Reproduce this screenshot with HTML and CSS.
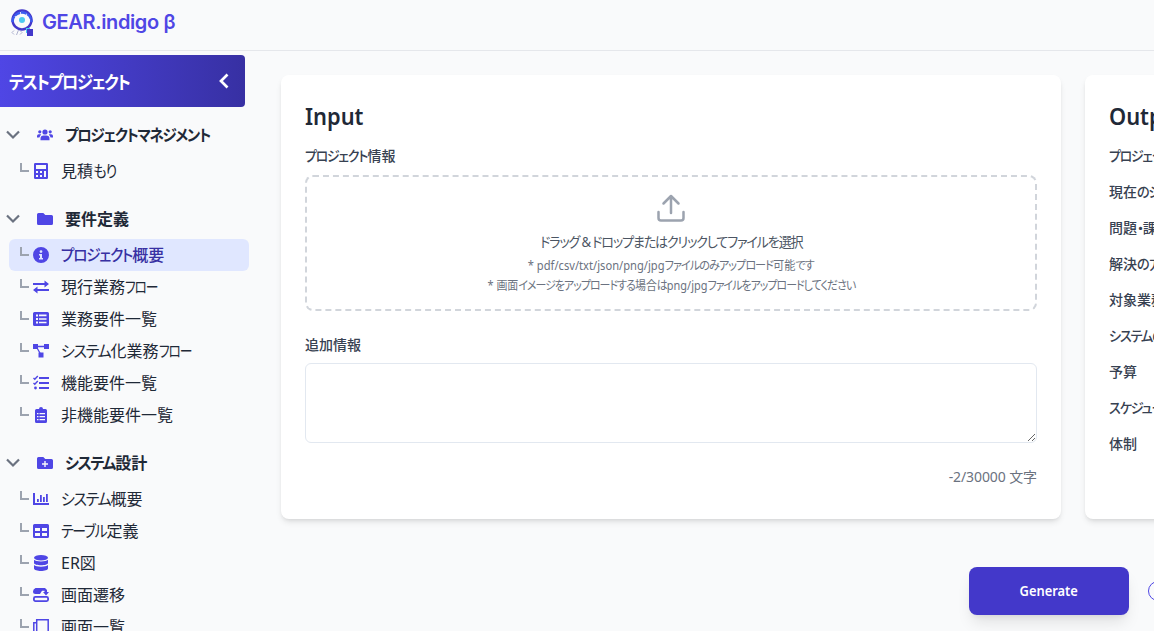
FILE: index.html
```html
<!DOCTYPE html>
<html lang="ja">
<head>
<meta charset="utf-8">
<title>GEAR.indigo β</title>
<link rel="stylesheet" href="styles.css">
</head>
<body>
<header class="topbar">
  <svg class="logo" viewBox="0 0 24 28"><circle cx="12" cy="11" r="9.500" fill="none" stroke="#4338ca" stroke-width="2.400"/><path d="M2.500 13a9.500 9.500 0 1 1 19 0" fill="none" stroke="#3b5cf0" stroke-width="2.400" stroke-dasharray="6 .8"/><circle cx="12" cy="11" r="3" fill="#4cc9f0"/><path d="M16 19h4v5h-4z" fill="#4cc9f0"/><path d="M17 20h6v7h-6z" fill="#4338ca"/><path d="M4 21.500l-2 2 2 2M8.500 21l-2 5M10 21.500l2 2-2 2" fill="none" stroke="#a5a8c8" stroke-width=".9"/></svg>
  <span class="brand">GEAR.indigo β</span>
</header>
<div class="layout">
<nav class="sidebar">
  <div class="project"><span class="kana k-project">テストプロジェクト</span><svg width="12" height="16" viewBox="0 0 12 16"><path d="M9.500 1.500L3 8l6.500 6.500" fill="none" stroke="#fff" stroke-width="2.700"/></svg></div>

  <div class="group">
    <div class="group-title"><svg class="chev" viewBox="0 0 14 10"><path d="M1 1.500l6 6 6-6"/></svg><svg class="icon" viewBox="0 0 16 16"><circle cx="8" cy="5" r="2.600"/><circle cx="2.800" cy="4.800" r="1.600"/><circle cx="13.200" cy="4.800" r="1.600"/><path d="M3.500 13.200v-1.500A3.200 3.200 0 0 1 6.700 8.500h2.600a3.200 3.200 0 0 1 3.200 3.200v1.500zM0 10.500V9a1.800 1.800 0 0 1 1.800-1.800h2.400L3 9.200l-.6 1.300zM16 10.500V9a1.800 1.800 0 0 0-1.800-1.800h-2.400L13 9.200l.6 1.300z"/></svg><span class="kana k-management">プロジェクトマネジメント</span></div>
    <div class="item"><i class="branch"></i><svg class="icon" viewBox="0 0 16 16"><path fill-rule="evenodd" d="M2.200 0h11.600q1.200 0 1.200 1.200v13.600q0 1.200-1.200 1.200H2.200Q1 16 1 14.800V1.200Q1 0 2.200 0zM3 2v4h10V2zM3 8v2h2V8zm4 0v2h2V8zm4 0v6h2V8zM3 12v2h2v-2zm4 0v2h2v-2z"/></svg><span>見積<span class="kana k-mori">もり</span></span></div>
  </div>

  <div class="group">
    <div class="group-title"><svg class="chev" viewBox="0 0 14 10"><path d="M1 1.500l6 6 6-6"/></svg><svg class="icon" viewBox="0 0 16 16"><path d="M0 3.500Q0 2 1.500 2h4.800l2 2h6.200Q16 4 16 5.500v7q0 1.500-1.500 1.500h-13Q0 14 0 12.500z"/></svg><span>要件定義</span></div>
    <div class="item active"><i class="branch"></i><svg class="icon" viewBox="0 0 16 16"><path fill-rule="evenodd" d="M8 0a8 8 0 1 0 0 16A8 8 0 0 0 8 0zm0 3.200a1.400 1.400 0 1 1 0 2.800 1.400 1.400 0 0 1 0-2.800zM6 7h3v4h1v1.500H6V11h1V8.500H6z"/></svg><span><span class="kana k-overview">プロジェクト</span>概要</span></div>
    <div class="item"><i class="branch"></i><svg class="icon" viewBox="0 0 16 16"><path d="M0 4h11.500V1.500L16 5l-4.500 3.500V6H0zM16 10H4.500V7.500L0 11l4.500 3.500V12H16z"/></svg><span>現行業務<span class="kana k-flow">フロー</span></span></div>
    <div class="item"><i class="branch"></i><svg class="icon" viewBox="0 0 16 16"><path fill-rule="evenodd" d="M1.500 1h13Q16 1 16 2.500v11q0 1.500-1.500 1.500h-13Q0 15 0 13.500v-11Q0 1 1.500 1zM3 3.600v2h2v-2zm3 0v1.600h7.500V3.600zM3 7v2h2V7zm3 .2v1.600h7.500V7.200zM3 10.400v2h2v-2zm3 .3v1.600h7.500v-1.600z"/></svg><span>業務要件一覧</span></div>
    <div class="item"><i class="branch"></i><svg class="icon" viewBox="0 0 16 16"><path d="M0 1h5v5H0zM11 1h5v5h-5zM5.500 9.500h5v5h-5z"/><path d="M4 3.500h8M3.500 4l4 7" fill="none" stroke="#4f46e5" stroke-width="1.300"/></svg><span><span class="kana k-system">システム</span>化業務<span class="kana k-flow">フロー</span></span></div>
    <div class="item"><i class="branch"></i><svg class="icon" viewBox="0 0 16 16"><path d="M6 2h10v1.900H6zM6 7h10v1.900H6zM6 12h10v1.900H6z"/><circle cx="2.500" cy="13" r="1.400"/><path d="M.5 3l1.300 1.300L4.800 1M.5 8l1.300 1.300L4.800 6" fill="none" stroke="#4f46e5" stroke-width="1.400"/></svg><span>機能要件一覧</span></div>
    <div class="item"><i class="branch"></i><svg class="icon" viewBox="0 0 16 16"><path fill-rule="evenodd" d="M3.500 2H6a2 2 0 0 1 4 0h2.500Q14 2 14 3.500v11q0 1.500-1.500 1.500h-9Q2 16 2 14.500v-11Q2 2 3.500 2zM4 6v1.300h1.500V6zm2.500 0v1.300H12V6zM4 9v1.300h1.500V9zm2.500 0v1.300H12V9zM4 12v1.300h1.500V12zm2.500 0v1.300H12V12z"/></svg><span>非機能要件一覧</span></div>
  </div>

  <div class="group">
    <div class="group-title"><svg class="chev" viewBox="0 0 14 10"><path d="M1 1.500l6 6 6-6"/></svg><svg class="icon" viewBox="0 0 16 16"><path fill-rule="evenodd" d="M0 3.500Q0 2 1.500 2h4.800l2 2h6.200Q16 4 16 5.500v7q0 1.500-1.500 1.500h-13Q0 14 0 12.500zM7.300 6v2.300H5v1.400h2.300V12h1.400V9.700H11V8.300H8.700V6z"/></svg><span><span class="kana k-system">システム</span>設計</span></div>
    <div class="item"><i class="branch"></i><svg class="icon" viewBox="0 0 16 16"><path d="M0 2h2v10h14v2H0zM4 8h1.800v3H4zM7 4h1.800v7H7zM10 6h1.800v5H10zM13 3h1.800v8H13z"/></svg><span><span class="kana k-system">システム</span>概要</span></div>
    <div class="item"><i class="branch"></i><svg class="icon" viewBox="0 0 16 16"><path fill-rule="evenodd" d="M1.500 1h13Q16 1 16 2.500v11q0 1.500-1.500 1.500h-13Q0 15 0 13.500v-11Q0 1 1.500 1zM2 5v3h5V5zm7 0v3h5V5zM2 10v3h5v-3zm7 0v3h5v-3z"/></svg><span><span class="kana k-table">テーブル</span>定義</span></div>
    <div class="item"><i class="branch"></i><svg class="icon" viewBox="0 0 16 16"><ellipse cx="8" cy="2.800" rx="7" ry="2.800"/><path d="M1 4.800c2 2.200 12 2.200 14 0V8c0 3-14 3-14 0zM1 10c2 2.200 12 2.200 14 0v3.200c0 3.600-14 3.600-14 0z"/></svg><span>ER図</span></div>
    <div class="item"><i class="branch"></i><svg class="icon" viewBox="0 0 16 16"><path d="M2.500 1H12l2 2v2h2l-3 3.500L10 5h1.500V3.800H9L7 7H2.500Q0 7 0 4.500T2.500 1z"/><rect x=".9" y="9.900" width="14.200" height="4.200" rx="1.500" fill="none" stroke="#4f46e5" stroke-width="1.800"/></svg><span>画面遷移</span></div>
    <div class="item"><i class="branch"></i><svg class="icon" viewBox="0 0 16 16"><path d="M3.700.8h11.500v12H3.700zM3.500 3.800H.8v11.500h11" fill="none" stroke="#4f46e5" stroke-width="1.500"/></svg><span>画面一覧</span></div>
  </div>
</nav>

<main class="content">
  <div class="cards">
    <section class="card">
      <h2>Input</h2>
      <div class="label"><span class="kana k-label">プロジェクト</span>情報</div>
      <div class="drop">
        <svg class="upload" viewBox="0 0 28 28"><path d="M1.500 18v6q0 2.500 2.500 2.500h20q2.500 0 2.500-2.500v-6M14 19V2M6.500 9.500L14 2l7.500 7.500" fill="none" stroke="#9ca3af" stroke-width="2.500" stroke-linecap="round" stroke-linejoin="round"/></svg>
        <p class="drop-main">ドラッグ &amp; ドロップまたはクリックしてファイルを選択</p>
        <p class="drop-note n1">* pdf/csv/txt/json/png/jpg<span class="kana">ファイルのみアップロード</span>可能<span class="kana">です</span></p>
        <p class="drop-note n2">* 画面<span class="kana">イメージをアップロードする</span>場合<span class="kana">は</span>png/jpg<span class="kana">ファイルをアップロードしてください</span></p>
      </div>
      <div class="label extra">追加情報</div>
      <textarea class="area"></textarea>
      <div class="count">-2/30000 文字</div>
    </section>
    <section class="card output">
      <h2>Output</h2>
      <ul>
        <li><span class="kana k-label">プロジェクト</span>情報</li>
        <li>現在<span class="kana k-list">のシステム</span></li>
        <li>問題<span class="kana k-dot">・</span>課題</li>
        <li>解決<span class="kana k-list">の</span>方針</li>
        <li>対象業務</li>
        <li><span class="kana k-list">システムの</span>範囲</li>
        <li>予算</li>
        <li><span class="kana k-list">スケジュール</span></li>
        <li>体制</li>
      </ul>
    </section>
  </div>
  <div class="actions">
    <button class="generate"><span>Generate</span></button>
    <span class="ring"></span>
  </div>
</main>
</div>
</body>
</html>
```
FILE: styles.css
```css
* { box-sizing: border-box; }
body {
  margin: 0;
  height: 631px;
  overflow: hidden;
  background: #f9fafb;
  color: #1f2937;
  font-family: "Noto Sans", "Noto Sans CJK JP", sans-serif;
  font-size: 16px;
}
svg { display: block; flex: none; }

/* Condensed kana: proportional metrics, then a horizontal squeeze */
.kana { font-feature-settings: "palt"; letter-spacing: -0.09em; }
.k-project, .k-management, .k-mori, .k-overview, .k-flow, .k-system, .k-table, .k-label, .k-list {
  display: inline-block;
  transform-origin: left center;
}
.k-project { transform: scaleX(.9); }
.k-management { transform: scaleX(.905); }
.k-mori { transform: scaleX(.9); }
.k-overview { transform: scaleX(.92); margin-right: -6px; }
.k-flow { transform: scaleX(.8); }
.k-system { transform: scaleX(.94); margin-right: -3px; }
.k-table { transform: scaleX(.865); margin-right: -7px; }
.k-label { transform: scaleX(.92); margin-right: -5px; }
.k-list { transform: scaleX(.94); }

.topbar {
  height: 51px;
  border-bottom: 1px solid #e5e7eb;
  display: flex;
  align-items: center;
  gap: 8px;
  padding: 0 0 5px 10px;
}
.logo { width: 24px; height: 28px; margin-top: 1px; }
.brand { font: 600 20px/28px Inter, sans-serif; letter-spacing: -0.38px; color: #4f46e5; white-space: nowrap; margin-bottom: 1px; }
.layout { display: flex; padding-top: 4px; }
.sidebar { width: 257px; flex: none; white-space: nowrap; }
.project {
  width: 245px;
  height: 52px;
  margin-bottom: 8px;
  padding: 0 15px 0 9px;
  display: flex;
  align-items: center;
  justify-content: space-between;
  border-radius: 0 4px 4px 0;
  background: linear-gradient(to right, #4f46e5, #3730a3);
  color: #fff;
  font-size: 18px;
  font-weight: 600;
}
.group { margin-bottom: 12px; }
.group-title {
  height: 40px;
  padding-left: 6px;
  display: flex;
  align-items: center;
  font-weight: 600;
}
.group-title > span, .item > span { margin-bottom: 2px; }
.chev { width: 14px; height: 10px; margin-right: 17px; fill: none; stroke: #6b7280; stroke-width: 2.2; }
.icon { width: 16px; height: 16px; fill: #4f46e5; margin-right: 12px; }
.item {
  height: 32px;
  width: 240px;
  margin-left: 9px;
  padding-left: 11px;
  display: flex;
  align-items: center;
  border-radius: 6px;
}
.active { background: #e0e7ff; color: #3730a3; font-weight: 500; }
.branch { width: 9px; height: 9px; margin: 0 4px 7px 0; border: solid #9ca3af; border-width: 0 0 2px 2px; }
.content { padding: 20px 0 0 24px; }
.cards { display: flex; gap: 24px; }
.card {
  width: 780px;
  height: 444px;
  flex: none;
  padding: 23px 24px 24px;
  border-radius: 8px;
  background: #fff;
  box-shadow: 0 4px 6px -1px #0000001a, 0 2px 4px -2px #0000001a;
}
h2 { margin: 0 0 12px; font-size: 24px; line-height: 36px; font-weight: 600; transform: scaleX(.91); transform-origin: left; }
.label { font-size: 14px; line-height: 20px; font-weight: 500; color: #374151; margin-bottom: 9px; }
.drop {
  height: 136px;
  border: 2px dashed #d1d5db;
  border-radius: 8px;
  display: flex;
  flex-direction: column;
  align-items: center;
  padding-top: 17px;
  white-space: nowrap;
}
.upload { width: 28px; height: 28px; }
.drop p { margin: 0; }
.drop-main { font-size: 14px; line-height: 20px; padding-top: 10px; color: #4b5563; font-feature-settings: "palt"; letter-spacing: -0.09em; height: 34px; transform: scaleX(.935); }
.drop-note { font-size: 12px; line-height: 20px; color: #6b7280; }
.n1 { transform: scaleX(.93); }
.n2 { transform: scaleX(.913); }
.extra { margin: 24px 0 8px; }
.area { display: block; width: 732px; height: 80px; border: 1px solid #e2e8f0; border-radius: 6px; background: #fff; resize: vertical; }
.count { margin-top: 24px; text-align: right; font-size: 14px; line-height: 20px; letter-spacing: -0.1px; color: #6b7280; }
.output ul { list-style: none; margin: 0; padding: 0; }
.output li { font-size: 14px; line-height: 20px; height: 20px; margin-bottom: 16px; font-weight: 500; color: #374151; white-space: nowrap; }
.actions { display: flex; align-items: center; gap: 19px; padding: 48px 0 0 688px; }
.generate {
  width: 160px;
  height: 48px;
  flex: none;
  border: 0;
  border-radius: 8px;
  background: #4338ca;
  color: #fff;
  font: 600 14px/20px "Noto Sans", sans-serif;
  box-shadow: 0 10px 15px -3px #0000001a, 0 4px 6px -4px #0000001a;
}
.generate span { display: inline-block; transform: scaleX(.92); }
.ring { width: 20px; height: 20px; flex: none; border: 1.5px solid #4f46e5; border-radius: 50%; }
```
